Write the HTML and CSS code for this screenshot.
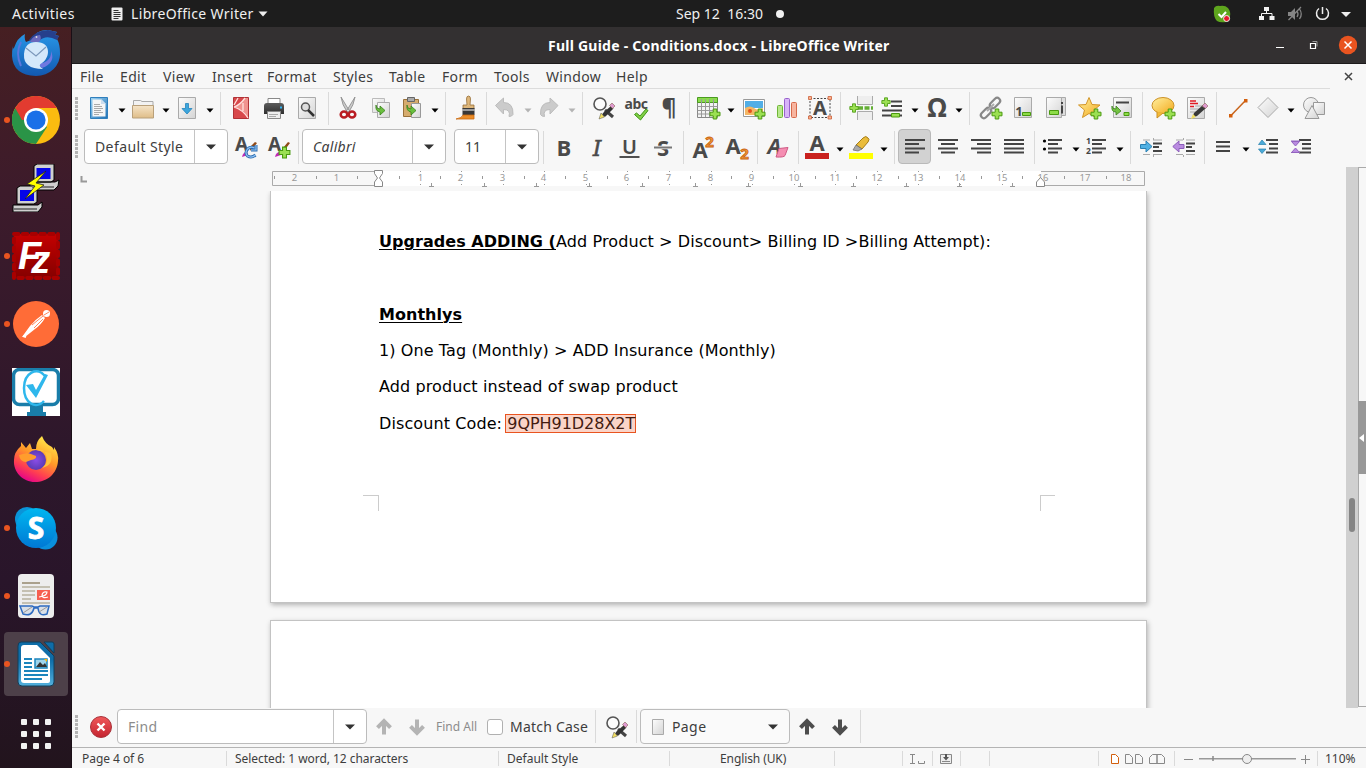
FILE: index.html
```html
<!DOCTYPE html>
<html lang="en">
<head>
<meta charset="utf-8">
<title>Full Guide - Conditions.docx - LibreOffice Writer</title>
<link rel="stylesheet" href="styles.css">
</head>
<body>
<svg class="defs" aria-hidden="true">
  <defs>
    <linearGradient id="gDark" x1="0" y1="0" x2="0" y2="1"><stop offset="0" stop-color="#5c5c5c"/><stop offset="1" stop-color="#2f2f2f"/></linearGradient>
    <linearGradient id="gPaper" x1="0" y1="0" x2="1" y2="1"><stop offset="0" stop-color="#fdfdfd"/><stop offset="1" stop-color="#d4d4d4"/></linearGradient>
    <linearGradient id="gBlue" x1="0" y1="0" x2="1" y2="1"><stop offset="0" stop-color="#9ed4f4"/><stop offset="1" stop-color="#1f70b4"/></linearGradient>
    <linearGradient id="gTan" x1="0" y1="0" x2="0" y2="1"><stop offset="0" stop-color="#f5e4c8"/><stop offset="1" stop-color="#dfbd88"/></linearGradient>
    <linearGradient id="gGold" x1="0" y1="0" x2="1" y2="1"><stop offset="0" stop-color="#fff0a0"/><stop offset="1" stop-color="#f3a91b"/></linearGradient>
    <linearGradient id="gRed" x1="0" y1="0" x2="0" y2="1"><stop offset="0" stop-color="#f0595b"/><stop offset="1" stop-color="#c4242f"/></linearGradient>
    <symbol id="arr" viewBox="0 0 8 24"><path d="M.5 11.5h7L4 15.5z"/></symbol>
    <symbol id="plus" viewBox="0 0 12 12"><path d="M4.2 1h3.6v3.2H11v3.6H7.8V11H4.2V7.8H1V4.2h3.200z" fill="#9be052" stroke="#4a9a10"/></symbol>
    <symbol id="findrep" viewBox="0 0 24 24"><circle cx="8" cy="8" r="6" fill="#fff" fill-opacity=".6" stroke="#555" stroke-width="1.600"/><path d="M13 14l8 7" stroke="#444" stroke-width="3"/><path d="M9 21l2-4 8-7 2.500 2.500-8 8z" fill="#333"/><path d="M7 23l2-6 3.500 4z" fill="#f2df62" stroke="#555" stroke-width=".5"/><path d="M17.500 9.500l2.500-2.500 3 3-2.500 2.500z" fill="#df9ad0" stroke="#865" stroke-width=".6"/></symbol>
    <symbol id="up" viewBox="0 0 24 24"><path d="M12 19.500V8M5.500 12.700L12 6.200l6.500 6.500" fill="none" stroke="currentColor" stroke-width="4"/></symbol>
    <symbol id="down" viewBox="0 0 24 24"><path d="M12 4.500V16M5.500 11.300l6.500 6.500 6.500-6.500" fill="none" stroke="currentColor" stroke-width="4"/></symbol>
  </defs>
</svg>

<header class="topbar">
  <span class="activities">Activities</span>
  <svg class="docicon" width="12" height="14" viewBox="0 0 12 14"><rect x=".5" y=".5" width="11" height="13" rx="1" fill="#eee"/><path d="M2.500 3.500h5M2.500 5.500h7M2.500 7.500h7M2.500 9.500h7M2.500 11.500h5" stroke="#333"/></svg>
  <span class="appname">LibreOffice Writer</span>
  <svg class="caret" width="10" height="6" viewBox="0 0 10 6"><path d="M.5.5h9L5 5.500z" fill="#eee"/></svg>
  <span class="clock">Sep 12&nbsp; 16:30</span>
  <span class="notify"></span>
  <svg class="tray" width="140" height="20" viewBox="1213 3 140 20">
    <path d="M1214 7q2-3 6-2 5-1 8 2 3 4 2 8 0 5-4 6-6 1-9-1-4-4-3-13z" fill="#5ea51d"/><path d="M1218.500 13l3 3 4.500-5" fill="none" stroke="#fff" stroke-width="2"/><circle cx="1226.600" cy="17.500" r="3" fill="#e8192c" stroke="#eee"/>
    <path d="M1264 6h5v4h-5zM1259 15h5v4h-5zM1269.500 15h5v4h-5z" fill="#f2f2f2"/><path d="M1266.500 10v3M1261.500 15v-2.500h10.500V15" fill="none" stroke="#f2f2f2"/>
    <path d="M1288 11h3l4-4v12l-4-4h-3z" fill="#858585"/><path d="M1297 10q2 3 0 6M1299.500 8q3.500 5 0 10M1288.500 19l12.500-13" fill="none" stroke="#858585" stroke-width="1.300"/>
    <path d="M1319 7.500a6 6 0 1 0 7 0M1322.500 6v7" fill="none" stroke="#eee" stroke-width="1.500"/><path d="M1341 11h10l-5 5z" fill="#eee"/>
  </svg>
</header>

<div class="desktop">
  <nav class="dock">
    <div class="app"><svg width="48" height="48" viewBox="0 0 48 48"><defs><linearGradient id="tb" x1="0" y1="0" x2="0" y2="1"><stop offset="0" stop-color="#2a9bea"/><stop offset="1" stop-color="#1258b0"/></linearGradient></defs><path d="M1 18q0 4 1 2Q5 10 13 6q-1 5 1 8l5-2Q25 1 36 2l9 2-2 3 4 1-2 3q3 5 3 14a24 22 0 0 1-24 23Q1 47 0 28q0-6 1-10z" fill="url(#tb)"/><path d="M17 12Q24 2 36 2l9 2-2 3 4 1-2 4Q34 6 27 13z" fill="#263f8c"/><path d="M18 14q3-7 10-7 2 4-1 7z" fill="#6a68bd"/><path d="M9 14Q3 25 9 38" fill="none" stroke="#5b77dc" stroke-width="2"/><path d="M26 36q14-2 13-13 5 12-9 17z" fill="#6f78e0"/><path d="M24 14c16 0 14 16 6 21q-5 2 1 6-20 0-19-15 1-12 12-12z" fill="#d4e8fa"/><path d="M14 20l10 8 10-9" fill="none" stroke="#7c98bb" stroke-width="1.200"/><circle cx="24.500" cy="9" r=".9" fill="#ddd"/></svg></div>
    <div class="app run"><svg width="48" height="48" viewBox="0 0 48 48"><circle cx="24" cy="24" r="24" fill="#fbbc10"/><path d="M24 24L3.200 12A24 24 0 0 0 24 48l11-17z" fill="#2a9447"/><path d="M3.200 12A24 24 0 0 1 44.800 12H24v12H10z" fill="#e23b30"/><circle cx="24" cy="24" r="12" fill="#fff"/><circle cx="24" cy="24" r="9.600" fill="#1a70e8"/></svg></div>
    <div class="app"><svg width="48" height="48" viewBox="0 0 48 48"><g stroke="#000" fill="#cfcfcf"><path d="M22 2l3-2h17v16l-3 2H22zM18 18h25l4-2-1 6-4 4H18z"/><path d="M5 24l3-2h17v16l-3 2H5zM1 41h25l4-3v5l-4 5H1z"/></g><path d="M24.500 4h14v11h-14zM8 26h14v11H8z" fill="#0505e8"/><path d="M2 45h23M20 23h22" stroke="#777" stroke-width="2"/><path d="M34 7L15 20l8 2-10 13 19-14-8-2z" fill="#ff0" stroke="#222" stroke-width=".8"/></svg></div>
    <div class="app run"><svg width="48" height="48" viewBox="0 0 48 48"><defs><linearGradient id="fz" x1="0" y1="0" x2="0" y2="1"><stop offset="0" stop-color="#c40000"/><stop offset="1" stop-color="#850000"/></linearGradient></defs><rect x="2" y="2" width="44" height="44" fill="url(#fz)" stroke="#a80000" stroke-width="4" stroke-dasharray="4.400 4.400" stroke-linecap="round"/><text class="fz" x="6" y="37">F<tspan dx="-10" dy="4">z</tspan></text></svg></div>
    <div class="app run"><svg width="48" height="48" viewBox="0 0 48 48"><circle cx="24" cy="24" r="23" fill="#ff6c37"/><circle cx="34.500" cy="13.500" r="3.500" fill="#fff"/><path d="M18 26q6-7 12-11l3 3q-4 7-10 11L13 37l-3 0z" fill="#fff"/><path d="M20 25l11-9M22 28l9-9M32 15l5-3" stroke="#ff6c37" stroke-width=".8"/><path d="M11 36l3 1" stroke="#fff" stroke-width="2"/></svg></div>
    <div class="app"><svg width="48" height="48" viewBox="0 0 48 48"><path d="M0 0h48v48H0z" fill="#fff"/><rect x="1.500" y="1.500" width="45" height="35" rx="6" fill="#fff" stroke="#197da9" stroke-width="3.500"/><path d="M18 38h13v6h3v4H15v-4h3z" fill="#197da9"/><path d="M33 8C25-2 12 5 12 20s12 22 20 13" fill="none" stroke="#2eb7ec" stroke-width="2.500"/><path d="M14 17l7-1 3 6L33 6l3 1-12 23z" fill="#2eb7ec"/></svg></div>
    <div class="app"><svg width="48" height="48" viewBox="0 1 48 48"><defs><linearGradient id="ff" x1=".8" y1="0" x2=".3" y2="1"><stop offset="0" stop-color="#fff44f"/><stop offset=".45" stop-color="#ff9a28"/><stop offset=".75" stop-color="#ff4050"/><stop offset="1" stop-color="#e3008c"/></linearGradient><radialGradient id="fp"><stop offset="0" stop-color="#8b4de8"/><stop offset="1" stop-color="#5b3bb5"/></radialGradient></defs><path d="M9 11V7l5 6 4-5 2 6h4q0-8 6-13 3 8 10 11l2 3V12q5 7 4 14c-1 13-11 21-23 21S1 37 2 25q0-8 7-14z" fill="url(#ff)"/><circle cx="24" cy="25" r="10" fill="url(#fp)"/><path d="M7 20q9-3 12-1l5 2q1 3-5 4l-5 2q-6 0-7-7z" fill="#ff9d2d"/><path d="M24 15q8-2 10 5 3 8-4 13 12-3 9-15z" fill="#ffc33b"/></svg></div>
    <div class="app run"><svg width="48" height="48" viewBox="0 0 48 48"><defs><linearGradient id="sk" x1="0" y1="0" x2="0" y2="1"><stop offset="0" stop-color="#00b7f0"/><stop offset="1" stop-color="#0078d4"/></linearGradient></defs><circle cx="15" cy="15" r="12" fill="#0a94d8"/><circle cx="33.500" cy="33.500" r="12" fill="#0a8fdc"/><circle cx="24" cy="24" r="20" fill="url(#sk)"/><text class="skype" x="24" y="35">S</text></svg></div>
    <div class="app run"><svg width="48" height="48" viewBox="0 0 48 48"><rect x="6" y="2" width="36" height="44" rx="4" fill="#ededed"/><path d="M10 11h18" stroke="#aaa18d" stroke-width="2"/><path d="M10 15h28M10 19h13M10 23h13M10 27h9M10 31h28" stroke="#c4c0b2" stroke-width="2"/><path d="M25 18h13v10H25z" fill="#f65f50"/><path d="M27 25q8-1 8-5-4-1-5 3 0 4 6 2" fill="none" stroke="#fff" stroke-width="1.200"/><path d="M8 34h12l2 1h4l2-1h9l-2 8q-8 3-9-6h-4q-2 9-11 6z" fill="#d9dfe6" stroke="#2e6bc0" stroke-width="1.500"/><path d="M11 41l9-6M27 40l8-5" stroke="#999"/></svg></div>
    <div class="app run current"><svg width="48" height="48" viewBox="0 0 48 48"><defs><linearGradient id="lw" x1="0" y1="0" x2="0" y2="1"><stop offset=".4" stop-color="#0e6da8"/><stop offset="1" stop-color="#53b0dd"/></linearGradient></defs><path d="M9 2h19l14 14v26q0 4-4 4H10q-4 0-4-4V6q0-4 3-4z" fill="url(#lw)" stroke="#123e5a"/><path d="M32 2h8q2 0 2 2v9z" fill="#0e6da8" stroke="#123e5a"/><path d="M12 5h13l13 13v23q0 2-2 2H12q-3 0-3-3V8q0-3 3-3z" fill="#fff"/><path d="M12 19h8M12 23h8M12 27h8M12 31h24M12 35h24M12 39h18" stroke="#1c85bd" stroke-width="2"/><path d="M23 19h12v9H23z" fill="#9fd4ec" stroke="#1c85bd" stroke-width="1.500"/><path d="M24 27l4-5 3 3 2-2 2 4z" fill="#333"/><path d="M32 19h3v3z" fill="#ffb400"/></svg></div>
    <div class="apps"><i></i><i></i><i></i><i></i><i></i><i></i><i></i><i></i><i></i></div>
  </nav>

  <main class="window">
    <div class="titlebar">
      <h1>Full Guide - Conditions.docx - LibreOffice Writer</h1>
      <svg class="winbtns" width="82" height="20" viewBox="1275 35 82 20"><path d="M1276 47.500h8" stroke="#fff"/><path d="M1312.500 41.500h4.500v5" fill="none" stroke="#999"/><path d="M1310.500 43.500h5v5h-5z" fill="none" stroke="#fff" stroke-width="1.200"/><circle cx="1348" cy="45" r="9.200" fill="#e95420"/><path d="M1344.500 41.500l7 7M1351.500 41.500l-7 7" stroke="#fff" stroke-width="1.500"/></svg>
    </div>

    <div class="menubar">
      <span>File</span><span>Edit</span><span>View</span><span>Insert</span><span>Format</span><span>Styles</span><span>Table</span><span>Form</span><span>Tools</span><span>Window</span><span>Help</span>
      <svg width="9" height="9" viewBox="0 0 9 9"><path d="M1 1l7 7M8 1L1 8" stroke="#444" stroke-width="1.500"/></svg>
    </div>

    <div class="toolbar standard">
      <i class="grip"></i>
      <svg class="ic" viewBox="0 0 24 24"><path d="M3.500 1.500h17v21h-17z" fill="url(#gBlue)" stroke="#2f7fbd"/><path d="M5.500 3.500h9l4 4v13h-13z" fill="#f6f6f6"/><path d="M14 3.500v4.500h4.500z" fill="#cde"/><path d="M7 8.500h6M7 10.500h8M7 12.500h9M7 14.500h7M7 16.500h9M7 18.500h5" stroke="#aaa"/></svg>
      <svg class="ar"><use href="#arr"/></svg>
      <svg class="ic" viewBox="0 0 24 24"><path d="M2.500 9V4.500h7l1.500 1h11V12h-20z" fill="#f2f2f2" stroke="#aaa"/><path d="M1.500 9.500h21v12.500h-21z" fill="url(#gTan)" stroke="#b9a07a"/></svg>
      <svg class="ar"><use href="#arr"/></svg>
      <svg class="ic" viewBox="0 0 24 24"><path d="M3.500 1.500h17v21h-17z" fill="url(#gPaper)" stroke="#aaa"/><path d="M10.500 7.500h3v5h3.500l-5 5.500-5-5.500h3.500z" fill="#3ca5dc" stroke="#2484bb" stroke-width=".8"/></svg>
      <svg class="ar"><use href="#arr"/></svg>
      <i class="sep"></i>
      <svg class="ic" viewBox="0 0 24 24"><path d="M4.500 1.500h15v21h-15z" fill="#d8484b" stroke="#b03236"/><path d="M16 2q-5 7-10 9 8 3 13 11V2z" fill="#f0938f"/><path d="M9 2L5 9M16 2q-5 7-11 9M5 11q9 3 14 11M14 7v8" fill="none" stroke="#ffe1de" stroke-width="1.300"/></svg>
      <svg class="ic" viewBox="0 0 24 24"><path d="M6 8V2.500h12V8" fill="#fff" stroke="#888"/><path d="M2 10q0-3 3-3h14q3 0 3 3v8H2z" fill="url(#gDark)"/><path d="M18 11.500h2" stroke="#31b4f2" stroke-width="2"/><path d="M5.500 15.500h13v7h-13z" fill="#eee" stroke="#888"/><path d="M7 18.500h9M7 20.500h7" stroke="#aaa"/></svg>
      <svg class="ic" viewBox="0 0 24 24"><path d="M3.500 1.500h17v21h-17z" fill="url(#gPaper)" stroke="#aaa"/><circle cx="10.500" cy="11" r="4" fill="#ddd" stroke="#555" stroke-width="1.500"/><path d="M13 14l6 6" stroke="#333" stroke-width="2.500"/></svg>
      <i class="sep"></i>
      <svg class="ic" viewBox="0 0 24 24"><path d="M5 1l8.500 14-2 1.500Q6 9 5 1zM19 1l-8.500 14 2 1.500Q18 9 19 1z" fill="#ccc" stroke="#888" stroke-width=".8"/><ellipse cx="8" cy="18.500" rx="3.300" ry="3" fill="none" stroke="#b91c22" stroke-width="2.500"/><ellipse cx="16" cy="18.500" rx="3.300" ry="3" fill="none" stroke="#b91c22" stroke-width="2.500"/></svg>
      <svg class="ic" viewBox="0 0 24 24"><path d="M3.500 2.500h12v14h-12z" fill="url(#gPaper)" stroke="#bbb"/><path d="M8.500 6.500h12v15h-12z" fill="url(#gPaper)" stroke="#aaa"/><path d="M7 9q0 4 4 4V10l5 4.500-5 4.500v-3q-5-1-4-7z" fill="#6abf3e" stroke="#37811a" stroke-width=".8"/></svg>
      <svg class="ic" viewBox="0 0 24 24"><path d="M3.500 3.500h15v17h-15z" fill="#d6ac6e" stroke="#99713a"/><path d="M7.500 1.500h7v4h-7z" fill="#aaa" stroke="#666"/><path d="M11.500 7.500h9v14h-9z" fill="url(#gPaper)" stroke="#999"/><path d="M7 9q0 4 4 4V10l5 4.500-5 4.500v-3q-5-1-4-7z" fill="#6abf3e" stroke="#37811a" stroke-width=".8"/></svg>
      <svg class="ar"><use href="#arr"/></svg>
      <i class="sep"></i>
      <svg class="ic" viewBox="0 0 24 24"><path d="M14.500 0q2 0 2 3l-.5 6h4v4H9V9h4l-.5-6q0-3 2-3z" fill="#ddb67a" stroke="#98703a" stroke-width=".8"/><path d="M8.500 12h12v7h-12z" fill="#383838"/><path d="M8.500 14h12" stroke="#fff"/><path d="M9 19h11v4H2q6-1 7-4z" fill="#eb8d28" stroke="#c96a10" stroke-width=".8"/></svg>
      <i class="sep"></i>
      <svg class="ic" viewBox="0 0 24 24"><path d="M2.500 9.500l8-7.500v4.500q10 0 9.500 12-1 2-4 2 2-7-5.500-7v4.500z" fill="#cbcbcb" stroke="#bcbcbc"/></svg>
      <svg class="ar off"><use href="#arr"/></svg>
      <svg class="ic" viewBox="0 0 24 24"><path d="M21 9.500L13 2v4.500Q3 6.500 3.500 18.500q1 2 4 2-2-7 5.500-7v4.500z" fill="#cbcbcb" stroke="#bcbcbc"/></svg>
      <svg class="ar off"><use href="#arr"/></svg>
      <i class="sep"></i>
      <svg class="ic"><use href="#findrep"/></svg>
      <span class="glyph abc">abc<svg width="16" height="13" viewBox="0 0 16 13"><path d="M1.500 6.500l2-1.500L7 8l6-7 2 1.500L7.500 12z" fill="#82cf47" stroke="#3c9613"/></svg></span>
      <span class="glyph pil">¶</span>
      <i class="sep"></i>
      <svg class="ic" viewBox="0 0 24 24"><path d="M.5 2.500h20v19H.5z" fill="#f3f3f3" stroke="#888"/><path d="M.5 1.500h20v5H.5z" fill="#8adc4b" stroke="#4a9a20"/><path d="M.5 10.500h20M.5 14.500h20M.5 18h20M4.500 3v18M8.500 3v18M12.500 3v18M16.500 3v18" stroke="#999"/><use href="#plus" x="12" y="12" width="12" height="12"/></svg>
      <svg class="ar"><use href="#arr"/></svg>
      <svg class="ic" viewBox="0 0 24 24"><path d="M1.500 3.500h21v17h-21z" fill="#fff" stroke="#999"/><path d="M3 5h18v7H3z" fill="#52aee6"/><path d="M3 12q5-3 9 0t9 0v7H3z" fill="#f4b765"/><circle cx="8" cy="15" r="2" fill="#e5511a"/><use href="#plus" x="12" y="12" width="12" height="12"/></svg>
      <svg class="ic" viewBox="0 0 24 24"><rect x="2.500" y="9.500" width="5" height="12" rx="1" fill="#b8e98c" stroke="#6fb636"/><rect x="9.500" y="2.500" width="5" height="19" rx="1" fill="#d7b4f7" stroke="#9861cc"/><rect x="16.500" y="6.500" width="5" height="15" rx="1" fill="#f7b5a0" stroke="#d66a4b"/></svg>
      <svg class="ic" viewBox="0 0 24 24"><path d="M2 2.500h20v19H2z" fill="none" stroke="#444" stroke-dasharray="2 1.500"/><path d="M.5.500h3v3h-3zM20 .5h3.500v3H20zM.5 20h3v3h-3zM20 20h3.500v3H20z" fill="#f9b28e" stroke="#cb603a" stroke-width=".8"/><text class="ltr" x="12" y="19" font-size="20">A</text></svg>
      <i class="sep"></i>
      <svg class="ic" viewBox="0 0 24 24"><path d="M8.500 0v8.500h15V0M8.500 24v-8.500h15V24" fill="#eee" stroke="#aaa"/><path d="M9 12h15" stroke="#63ae34" stroke-width="3.500" stroke-dasharray="5 1.500"/><use href="#plus" x="0" y="7" width="10" height="10"/></svg>
      <svg class="ic" viewBox="0 0 24 24"><path d="M10 5.500h11M10 10h11M1 14.500h20M1 19.500h20" stroke="#444" stroke-width="2"/><use href="#plus" x="0" y="1" width="10" height="10"/><path d="M10.500 17.500h8v3.500h-8z" fill="#9be052" stroke="#4a9a10"/></svg>
      <svg class="ar"><use href="#arr"/></svg>
      <svg class="ic" viewBox="0 0 24 24"><text class="ltr" x="12" y="21" font-size="26">Ω</text></svg>
      <svg class="ar"><use href="#arr"/></svg>
      <i class="sep"></i>
      <svg class="ic" viewBox="0 0 24 24"><g fill="none" stroke="#888" stroke-width="2.200"><rect x="10" y="4" width="12" height="6" rx="3" transform="rotate(-45 16 7)"/><rect x="1" y="14" width="12" height="6" rx="3" transform="rotate(-45 7 17)"/></g><path d="M8 15l7-7" stroke="#aaa" stroke-width="2"/><use href="#plus" x="12" y="12" width="12" height="12"/></svg>
      <svg class="ic" viewBox="0 0 24 24"><path d="M3.500 1.500h17v20h-17z" fill="url(#gPaper)" stroke="#aaa"/><text class="ltr" x="8" y="20" font-size="13">1</text><path d="M11.500 16.500h8v3h-8z" fill="#8ddc48" stroke="#4a9a10"/></svg>
      <svg class="ic" viewBox="0 0 24 24"><path d="M6.500 1.500h15v18h-15z" fill="#ddd" stroke="#aaa"/><path d="M2.500 1.500h15v20h-15z" fill="url(#gPaper)" stroke="#aaa"/><path d="M5.500 14.500h9v4h-9z" fill="#8ddc48" stroke="#4a9a10"/><path d="M18 6v2M18 9.500v8" stroke="#444" stroke-width="2"/></svg>
      <svg class="ic" viewBox="0 0 24 24"><path d="M12 1.500l3 7 8 .5-6 5 2 7.500-7-4-6.500 4 2-7.500-6-5 7.500-.5z" fill="url(#gGold)" stroke="#d29528"/><use href="#plus" x="13" y="12" width="12" height="12"/></svg>
      <svg class="ic" viewBox="0 0 24 24"><path d="M3.500 1.500h18v20h-18z" fill="url(#gPaper)" stroke="#aaa"/><path d="M6 6.500h13" stroke="#444" stroke-width="2"/><path d="M2 10q0 3 4 3v-3l5 5-5 4v-3q-5 0-4-6z" fill="#74c243" stroke="#3a811b" stroke-width=".8"/><path d="M14 16.500h5v3h-5z" fill="#8ddc48" stroke="#4a9a10"/></svg>
      <i class="sep"></i>
      <svg class="ic" viewBox="0 0 24 24"><ellipse cx="12" cy="9.500" rx="11" ry="8" fill="url(#gGold)" stroke="#cb9127"/><path d="M6 16v6l6-5" fill="#f3b938" stroke="#cb9127"/><use href="#plus" x="13" y="12" width="12" height="12"/></svg>
      <svg class="ic" viewBox="0 0 24 24"><path d="M1.500 1.500h17v21h-17z" fill="url(#gPaper)" stroke="#aaa"/><path d="M4 5h6M4 7.500h8M4 10.500h4" stroke="#e11b22" stroke-width="1.300"/><path d="M9 10h7M4 13h10M4 16h8" stroke="#aaa"/><path d="M6 22l2-5 9-8 3 3-9 8z" fill="#383838"/><path d="M5 23l2-5 3 3z" fill="#f2df62"/><path d="M16 10l3-3 3 3-2.500 2.500z" fill="#df9ad0" stroke="#865" stroke-width=".6"/></svg>
      <i class="sep"></i>
      <svg class="ic" viewBox="0 0 24 24"><path d="M5 19.500L19.500 4.500" stroke="#c8641b" stroke-width="1.500"/><path d="M3 18h3.500v3.500H3zM18 3h3.500v3.500H18z" fill="#d35f0d"/></svg>
      <svg class="ic" viewBox="0 0 24 24"><path d="M12 1.500l10 10-10 10-10-10z" fill="url(#gPaper)" stroke="#aaa"/></svg>
      <svg class="ar"><use href="#arr"/></svg>
      <svg class="ic" viewBox="0 0 24 24"><circle cx="9" cy="9" r="7.500" fill="url(#gPaper)" stroke="#999"/><path d="M11.500 6.500h11v12h-11z" fill="url(#gPaper)" stroke="#999"/><path d="M10 9.500l7 13H3z" fill="url(#gPaper)" stroke="#999"/></svg>
    </div>

    <div class="toolbar format">
      <i class="grip"></i>
      <div class="combo style"><span>Default Style</span><b><svg width="10" height="6"><path d="M0 .5h10L5 5.500z"/></svg></b></div>
      <svg class="ic" viewBox="0 0 24 24"><text class="ltr" x="7.500" y="16" font-size="19">A</text><path d="M15 13l6-6 2 1-6 8z" fill="#8f4a19"/><path d="M8 22q1-5 5-5l1 3z" fill="#c02ab5"/><path d="M20.500 13q-4-2-7 1-3 4 0 7 4 2.500 8-1M22 10v5h-5" fill="none" stroke="#2c6cb0" stroke-width="3"/><path d="M20.500 13q-4-2-7 1-3 4 0 7 4 2.500 8-1M22 10v5h-5" fill="none" stroke="#8fc1f2" stroke-width="1.200"/></svg>
      <svg class="ic" viewBox="0 0 24 24"><text class="ltr" x="8.500" y="16" font-size="19">A</text><path d="M17 13l5-6 2 1-6 8z" fill="#8f4a19"/><path d="M9 22q1-5 5-5l1 3z" fill="#c02ab5"/><use href="#plus" x="12" y="11" width="13" height="13"/></svg>
      <i class="sep"></i>
      <div class="combo font"><span>Calibri</span><b><svg width="10" height="6"><path d="M0 .5h10L5 5.500z"/></svg></b></div>
      <div class="combo size"><span>11</span><b><svg width="10" height="6"><path d="M0 .5h10L5 5.500z"/></svg></b></div>
      <i class="sep"></i>
      <svg class="ic" viewBox="0 0 24 24"><text class="ltr cond" x="12" y="20.500" font-size="22">B</text></svg>
      <svg class="ic" viewBox="0 0 24 24"><text class="ltr ital" x="12" y="20.500" font-size="22">I</text></svg>
      <svg class="ic" viewBox="0 0 24 24"><text class="ltr thin" x="12.500" y="18.500" font-size="20">U</text><path d="M2.500 22h20" stroke="#505050" stroke-width="2"/></svg>
      <svg class="ic" viewBox="0 0 24 24"><text class="ltr" x="12" y="20.500" font-size="22">S</text><path d="M3 12.500h18" stroke="#f7f7f7" stroke-width="3.500"/><path d="M3 12.500h18" stroke="#777" stroke-width="2"/></svg>
      <i class="sep"></i>
      <svg class="ic wide" viewBox="0 0 26 24"><text class="ltr" x="9" y="23" font-size="22">A</text><text class="num2" x="18.500" y="11.500">2</text></svg>
      <svg class="ic wide" viewBox="0 0 26 24"><text class="ltr" x="8" y="19" font-size="22">A</text><text class="num2" x="19.500" y="24">2</text></svg>
      <i class="sep"></i>
      <svg class="ic" viewBox="0 0 24 24"><text class="ltr slant" x="8.500" y="18.500" font-size="22">A</text><path d="M13 13.500l9-1-3 8q-1 2-9 1.500z" fill="#f58eb2" stroke="#cf5a85"/></svg>
      <i class="sep"></i>
      <svg class="ic" viewBox="0 0 24 24"><text class="ltr" x="12" y="15.500" font-size="22">A</text><path d="M0 18h24v6H0z" fill="#c9211e"/></svg>
      <svg class="ar"><use href="#arr"/></svg>
      <svg class="ic" viewBox="0 0 24 24"><path d="M7 10l7-7q3-3 5 0 2 1 0 4l-6 7z" fill="#eabc3b" stroke="#a57d18"/><path d="M4 15l3-5 6 4-4 2z" fill="#aaa" stroke="#666" stroke-width=".7"/><path d="M0 18h24v6H0z" fill="#ff0"/></svg>
      <svg class="ar"><use href="#arr"/></svg>
      <i class="sep"></i>
      <span class="pressed"><svg class="ic" viewBox="0 0 24 24"><path d="M2 5h20M2 9h14M2 13.500h20M2 17.500h14" stroke="#444" stroke-width="2"/></svg></span>
      <svg class="ic" viewBox="0 0 24 24"><path d="M2 5h20M5 9h14M2 13.500h20M5 17.500h14" stroke="#444" stroke-width="2"/></svg>
      <svg class="ic" viewBox="0 0 24 24"><path d="M2 5h20M8 9h14M2 13.500h20M8 17.500h14" stroke="#444" stroke-width="2"/></svg>
      <svg class="ic" viewBox="0 0 24 24"><path d="M2 5h20M2 9h20M2 13.500h20M2 17.500h20" stroke="#444" stroke-width="2"/></svg>
      <i class="sep"></i>
      <svg class="ic" viewBox="0 0 24 24"><path d="M7 5h14M7 9h10M7 13.500h14M7 17.500h10" stroke="#444" stroke-width="2"/><circle cx="3.500" cy="6" r="1.600"/><circle cx="3.500" cy="14" r="1.600"/></svg>
      <svg class="ar"><use href="#arr"/></svg>
      <svg class="ic" viewBox="0 0 24 24"><g class="tiny"><text x="3.500" y="9">1</text><text x="3.500" y="18.500">2</text></g><path d="M7 5h14M7 9h10M7 13.500h14M7 17.500h10" stroke="#444" stroke-width="2"/></svg>
      <svg class="ar"><use href="#arr"/></svg>
      <i class="sep"></i>
      <svg class="ic" viewBox="0 0 24 24"><path d="M14 5h9M4 5h7M4 19.500h7M14 19.500h9M14.500 3v2M14.500 20v2" stroke="#aaa"/><path d="M14 8.500h9M14 12h6M14 16h9" stroke="#444" stroke-width="2"/><path d="M1.500 9.500H7V6l6 5.500L7 17v-3.500H1.500z" fill="#50b1e4" stroke="#2a81b4"/></svg>
      <svg class="ic" viewBox="0 0 24 24"><path d="M14 5h9M4 5h7M4 19.500h7M14 19.500h9M11.500 3v2M11.500 20v2" stroke="#aaa"/><path d="M14 8.500h9M14 12h6M14 16h9" stroke="#444" stroke-width="2"/><path d="M12 9.500H7V6L.8 11.500 7 17v-3.500h5z" fill="#b98be0" stroke="#8c5dbb"/></svg>
      <i class="sep"></i>
      <svg class="ic" viewBox="0 0 24 24"><path d="M5 7h14M5 11.500h14M5 16h14" stroke="#444" stroke-width="2"/></svg>
      <svg class="ar"><use href="#arr"/></svg>
      <svg class="ic" viewBox="0 0 24 24"><path d="M10 5h12M13 9h9M13 13.500h9M10 17.500h12" stroke="#444" stroke-width="2"/><path d="M2.500 9.500L6 5l4 4.500zM2.500 14L6 18.500l4-4.500z" fill="#4aaad8" stroke="#2780ac" stroke-width=".7"/></svg>
      <svg class="ic" viewBox="0 0 24 24"><path d="M10 5h12M13 9h9M13 13.500h9M10 17.500h12" stroke="#444" stroke-width="2"/><path d="M2.500 6.500h8L6.500 11zM2.500 17.500l4-4.500 4 4.500zM2 6h9M2 17.500h9" fill="#b98be0" stroke="#9364c0"/></svg>
    </div>

    <div class="editor">
      <div class="canvas">
        <div class="rulerrow">
          <svg width="1274" height="24" viewBox="72 167 1274 24">
            <path d="M81.500 176v5.500H87" fill="none" stroke="#999" stroke-width="2"/>
            <path d="M378 171h663v15H378z" fill="#fff"/>
            <path d="M378 171.500H272.500v14H378M1041 171.500h103.500v14H1041" fill="#f7f7f7" stroke="#aaa"/>
            <path class="half" d="M274.500 176v3M316.500 176v3M357.500 176v3M399.500 176v3M440.500 176v3M482.500 176v3M524.500 176v3M565.500 176v3M607.500 176v3M648.500 176v3M690.500 176v3M731.500 176v3M773.500 176v3M815.500 176v3M856.500 176v3M898.500 176v3M939.500 176v3M981.500 176v3M1022.500 176v3M1064.500 176v3M1106.500 176v3"/>
            <path class="half" d="M420.500 171v1m0 12v1M461.500 171v1m0 12v1M503.500 171v1m0 12v1M544.500 171v1m0 12v1M586.500 171v1m0 12v1M627.500 171v1m0 12v1M669.500 171v1m0 12v1M711.500 171v1m0 12v1M752.500 171v1m0 12v1M794.500 171v1m0 12v1M835.500 171v1m0 12v1M877.500 171v1m0 12v1M918.500 171v1m0 12v1M960.500 171v1m0 12v1M1002.500 171v1m0 12v1"/>
            <path class="half" d="M431.500 183v3m-2.500.500h5M484.500 183v3m-2.500.500h5M536.500 183v3m-2.500.500h5M589.500 183v3m-2.500.500h5M642.500 183v3m-2.500.500h5M695.500 183v3m-2.500.500h5M748.500 183v3m-2.500.500h5M800.500 183v3m-2.500.500h5M853.500 183v3m-2.500.500h5M906.500 183v3m-2.500.500h5M959.500 183v3m-2.500.500h5M1012.500 183v3m-2.500.500h5"/>
            <g class="rnum"><text x="294.500" y="181">2</text><text x="336.500" y="181">1</text><text x="420.500" y="181">1</text><text x="460.500" y="181">2</text><text x="502.500" y="181">3</text><text x="543.500" y="181">4</text><text x="585.500" y="181">5</text><text x="626.500" y="181">6</text><text x="668.500" y="181">7</text><text x="710.500" y="181">8</text><text x="751.500" y="181">9</text><text x="794" y="181">10</text><text x="835" y="181">11</text><text x="877" y="181">12</text><text x="918" y="181">13</text><text x="960" y="181">14</text><text x="1002" y="181">15</text><text x="1043" y="181">16</text><text x="1085" y="181">17</text><text x="1126" y="181">18</text></g>
            <path d="M374.500 170.500h8v3l-3 4.500 3 4v4.500h-8V182l3-4-3-4.500zM1036.500 186.500V182l4-4.500 4 4.500v4.500z" fill="#fff" stroke="#888"/>
          </svg>
        </div>
        <div class="pages">
          <article class="page first">
            <p><strong>Upgrades ADDING (</strong>Add Product &gt; Discount&gt; Billing ID &gt;Billing Attempt):</p>
            <p>&nbsp;</p>
            <p><strong>Monthlys</strong></p>
            <p>1) One Tag (Monthly) &gt; ADD Insurance (Monthly)</p>
            <p>Add product instead of swap product</p>
            <p>Discount Code: <mark>9QPH91D28X2T</mark></p>
            <div class="corners"><i></i><i></i></div>
          </article>
          <article class="page second"></article>
        </div>
      </div>
      <div class="scroll"><i></i></div>
      <div class="sidebar"><i><svg width="5" height="8"><path d="M5 0v8L0 4z" fill="#fff"/></svg></i></div>
    </div>

    <div class="findbar">
      <i class="grip"></i>
      <svg class="close" width="22" height="22" viewBox="0 0 22 22"><circle cx="11" cy="11" r="10.500" fill="url(#gRed)" stroke="#a9333b"/><path d="M7.500 7.500l7 7M14.500 7.500l-7 7" stroke="#fff" stroke-width="2.400"/></svg>
      <div class="combo find"><span>Find</span><b><svg width="10" height="6"><path d="M0 .5h10L5 5.500z"/></svg></b></div>
      <svg class="ic off"><use href="#up"/></svg>
      <svg class="ic off"><use href="#down"/></svg>
      <span class="findall">Find All</span>
      <i class="check"></i>
      <span class="match">Match Case</span>
      <i class="sep"></i>
      <svg class="ic"><use href="#findrep"/></svg>
      <i class="sep"></i>
      <div class="combo nav"><svg width="12" height="16"><path d="M.5.5h11v15H.5z" fill="url(#gPaper)" stroke="#aaa"/></svg><span>Page</span><svg width="10" height="6"><path d="M0 .5h10L5 5.500z"/></svg></div>
      <svg class="ic"><use href="#up"/></svg>
      <svg class="ic"><use href="#down"/></svg>
      <i class="sep"></i>
    </div>

    <footer class="status">
      <span class="s-page">Page 4 of 6</span><i></i>
      <span class="s-sel">Selected: 1 word, 12 characters</span><i></i>
      <span class="s-style">Default Style</span><i></i>
      <span class="s-lang">English (UK)</span><i></i>
      <em></em><i></i>
      <svg width="16" height="12" viewBox="0 0 16 12"><path d="M0 1.500h5M0 10.500h5M2.500 1v10M8.500 8v2.500h6V8" fill="none" stroke="#888"/></svg><i></i>
      <svg width="14" height="12" viewBox="0 0 14 12"><path d="M1.500 1.500h11v9h-11z" fill="#eee" stroke="#888"/><path d="M3 8.500h8" stroke="#888"/><path d="M6 1h2v3h2L7 7.500 4 4h2z" fill="#555"/></svg><i></i>
      <em></em><i></i><em></em><i></i>
      <svg width="56" height="12" viewBox="1110 753 56 12"><path d="M1111.500 754.500h4l3 3v6h-7z" fill="#fff" stroke="#d35f0d"/><path d="M1125.500 754.500h4l3 3v6h-7zM1135.500 754.500h4l3 3v6h-7zM1157 754.500v9h-7.500v-6l3-3zM1157 754.500h4.500l3 3v6H1157z" fill="none" stroke="#888"/></svg><i></i>
      <svg width="128" height="12" viewBox="1183 753 128 12"><path d="M1184 759.500h9M1301 759.500h9M1305.500 755v9" stroke="#888"/><path d="M1199 758.700h97" stroke="#999" stroke-width="1.500"/><path d="M1213 756v5" stroke="#888" stroke-width="1.500"/><circle cx="1247" cy="759" r="4.500" fill="#eee" stroke="#888"/></svg><i></i>
      <span class="zoom">110%</span>
    </footer>
  </main>
</div>
</body>
</html>
```
FILE: styles.css
```css
* { box-sizing: border-box; }
body {
  margin: 0;
  width: 1366px;
  height: 768px;
  overflow: hidden;
  display: flex;
  flex-direction: column;
  background: #f7f7f7;
  color: #3d3d3d;
  font: 14px/20px "Noto Sans", sans-serif;
}
.defs { position: absolute; width: 0; height: 0; }
svg { display: block; flex: none; }
i { display: block; font-style: normal; }

/* top panel */
.topbar {
  flex: none;
  height: 27px;
  padding: 0 13px 0 12px;
  display: flex;
  align-items: center;
  background: #1d1d1d;
  color: #f0f0f0;
  white-space: nowrap;
}
.activities { width: 99px; letter-spacing: .45px; }
.appname { width: 127px; margin-left: 8px; letter-spacing: .35px; }
.clock { margin-left: 408px; width: 99px; }
.notify { width: 8px; height: 8px; border-radius: 50%; background: #f0f0f0; margin-left: 1px; }
.tray { margin-left: auto; }

.desktop { flex: 1; min-height: 0; display: flex; }

/* dock */
.dock {
  flex: none;
  width: 72px;
  overflow: hidden;
  display: flex;
  flex-direction: column;
  justify-content: flex-end;
  box-shadow: inset -1px 0 #1a0f16;
  background: linear-gradient(#461f22, #3d1b2b 22%, #2d172b 58%, #29152a 75%, #22141d);
}
.app {
  flex: none;
  height: 68px;
  display: flex;
  align-items: center;
  padding-left: 12px;
  position: relative;
}
.run::before {
  content: "";
  position: absolute;
  left: 4px;
  top: 31px;
  width: 6px;
  height: 6px;
  border-radius: 50%;
  background: #e95420;
}
.current { height: 64px; margin: 2px 4px; padding-left: 8px; border-radius: 4px; background: #4d4049; }
.current::before { left: 0; top: 29px; }
.fz { font: italic 700 38px "Liberation Sans", sans-serif; fill: #fff; }
.skype { font: 700 30px "Noto Sans", sans-serif; fill: #fff; stroke: #fff; stroke-width: .8px; text-anchor: middle; }
.apps {
  flex: none;
  height: 70px;
  padding: 21px 0 0 21px;
  display: grid;
  grid-template-columns: repeat(3, 6px);
  grid-auto-rows: 6px;
  gap: 6px;
}
.apps i { border-radius: 1px; background: #f2f2f2; }

/* window */
.window { flex: 1; min-width: 0; display: flex; flex-direction: column; }
.titlebar {
  flex: none;
  height: 37px;
  display: flex;
  align-items: center;
  padding: 0 9px 0 476px;
  background: #333031;
  border-bottom: 1px solid #1d1b1c;
}
.titlebar h1 { margin: 0; padding-top: 1px; font-size: 14px; line-height: 20px; letter-spacing: .24px; color: #fff; white-space: nowrap; }
.winbtns { margin-left: auto; }
.menubar {
  flex: none;
  height: 24px;
  padding: 1px 0 0 8px;
  display: grid;
  grid-template-columns: 40px 43px 49px 55px 66px 56px 53px 52px 52px 70px 728px auto;
  align-items: center;
  white-space: nowrap;
  letter-spacing: .35px;
}
.menubar svg { margin-bottom: 1px; }
.toolbar { flex: none; display: grid; align-items: center; padding-left: 3px; }
.standard {
  width: 1258px;
  height: 39px;
  border-top: 1px solid #dcdcdc;
  grid-template-columns: 12px 30px 14px 30px 14px 30px 15px 9px 33px 33px 33px 8px 33px 31px 30px 15px 9px 32px 7px 30px 14px 30px 15px 10px 32px 33px 32px 8px 29px 16px 33px 33px 32px 9px 32px 29px 15px 29px 15px 10px 32px 33px 33px 33px 32px 9px 35px 30px 10px 30px 30px 16px 28px;
}
.format {
  height: 40px;
  grid-template-columns: 9px 150px 32px 32px 4px 152px 89px 9px 33px 32px 34px 32px 8px 34px 32px 9px 32px 7px 30px 14px 30px 15px 4px 38px 33px 33px 32px 7px 30px 14px 30px 15px 9px 33px 32px 7px 30px 15px 33px 41px;
}
.ic { width: 24px; height: 24px; color: #4d4d4d; overflow: visible; }
.wide { width: 26px; }
.ar { width: 8px; height: 24px; color: #000; fill: #000; margin: 1px 0 0 .5px; }
.off { color: #b4b4b4; fill: #b4b4b4; }
.sep { width: 1px; height: 33px; background: #dadada; }
.grip { width: 3px; height: 23px; background: repeating-linear-gradient(#b4b4b4 0 3px, transparent 3px 4px); }
.glyph { height: 24px; font-weight: 700; color: #4a4a4a; }
.abc { display: flex; flex-direction: column; align-items: center; width: 24px; padding-top: 2px; font-size: 14px; line-height: 12px; letter-spacing: -.5px; }
.abc svg { margin: -2px 0 0 9px; }
.pil { width: 24px; text-align: center; font-size: 23px; line-height: 22px; }
.ltr { font-weight: 700; fill: #4a4a4a; text-anchor: middle; }
.cond { font-family: "Open Sans", sans-serif; }
.thin { font-weight: 600; }
.slant { font-style: italic; }
.ital { font-style: italic; font-family: "DejaVu Serif", serif; font-weight: 400; stroke: #4a4a4a; stroke-width: .5px; }
.num2 { font-size: 15px; font-weight: 700; fill: #f39a3c; stroke: #c9640f; stroke-width: .9px; text-anchor: middle; }
.tiny { font-size: 8.500px; font-weight: 700; fill: #444; text-anchor: middle; }
.combo {
  height: 35px;
  display: flex;
  align-items: center;
  border: 1px solid #bcbcbc;
  border-radius: 4px;
  background: #fff;
  padding-left: 10px;
  white-space: nowrap;
}
.combo b {
  margin-left: auto;
  height: 100%;
  display: flex;
  align-items: center;
  justify-content: center;
  border-left: 1px solid #c4c4c4;
}
.combo svg { fill: #333; }
.format .combo, .format .pressed, .format .grip { margin-bottom: 1px; }
.style { width: 144px; letter-spacing: .4px; }
.style b, .font b { width: 33px; }
.font { width: 144px; font-style: italic; letter-spacing: .3px; }
.size { width: 85px; }
.size b { width: 33px; }
.pressed { width: 33px; height: 35px; display: grid; place-items: center; border: 1px solid #b9b9b9; border-radius: 4px; background: #d2d2d2; }

/* document */
.editor { flex: 1; min-height: 0; display: flex; }
.canvas { flex: 1; min-width: 0; display: flex; flex-direction: column; }
.rulerrow { flex: none; height: 24px; }
.half { fill: none; stroke: #999; }
.rnum { font-size: 9.500px; fill: #999; text-anchor: middle; }
.pages { flex: 1; min-height: 0; overflow: hidden; padding-left: 198px; }
.page { width: 877px; background: #fff; border: 1px solid #c3c3c3; box-shadow: 1px 2px 5px rgba(0, 0, 0, .28); }
.first { height: 412px; border-top: 0; padding: 32.800px 91px 0 108px; color: #000; font: 16px/36.400px "DejaVu Sans", sans-serif; letter-spacing: .1px; }
.first p { margin: 0; white-space: nowrap; }
.first strong { letter-spacing: .04px; text-decoration: underline; text-decoration-thickness: 1px; text-underline-offset: 2px; }
.first mark { display: inline-block; height: 19px; line-height: 18px; margin-left: -2px; padding-left: 1px; border: 1px solid #e95420; background: #fad4c8; color: #431b10; letter-spacing: -.04px; }
.corners { display: flex; justify-content: space-between; margin: 53.200px 0 0 -16px; }
.corners i { width: 16px; height: 16px; border: solid #ccc; border-width: 1px 1px 0 0; }
.corners i:last-child { width: 15px; border-width: 1px 0 0 1px; }
.second { height: 120px; margin-top: 17px; }
.scroll { flex: none; width: 12px; padding: 331px 3px 0; background: #d0d0d0; }
.scroll i { width: 6px; height: 34px; border-radius: 3px; background: #858585; }
.sidebar { flex: none; width: 8px; height: 540px; padding-top: 233px; border: 1px solid #aaa; border-right: 0; }
.sidebar i { height: 73px; display: flex; align-items: center; margin-left: -1px; padding-left: 1px; background: #989898; }

/* find bar */
.findbar {
  flex: none;
  height: 39px;
  padding: 0 0 2px 3px;
  display: grid;
  grid-template-columns: 15px 27px 255px 33px 31px 51px 23px 85px 10px 31px 4px 155px 33px 32px 20px;
  align-items: center;
  white-space: nowrap;
}
.find { width: 250px; color: #8c8c8c; letter-spacing: .3px; }
.find b { width: 33px; }
.findall { font-size: 12px; color: #8c8c8c; }
.match { letter-spacing: .22px; }
.check { width: 16px; height: 16px; border: 1px solid #b0b0b0; border-radius: 3px; background: #fff; }
.nav { width: 150px; gap: 8px; padding: 0 11px; background: #fafafa; letter-spacing: .4px; }
.nav svg:last-child { margin-left: auto; }

/* status bar */
.status {
  flex: none;
  height: 21px;
  display: grid;
  grid-template-columns: 144px 9px 263px 9px 162px 1px 164px 1px 67px 8px 22px 7px 21px 1px 28px 1px 108px 12px 64px 9px 134px 8px auto;
  align-items: center;
  padding: 1px 0 0 10px;
  border-top: 1px solid #b4b4b4;
  font-size: 12px;
  line-height: 18px;
  white-space: nowrap;
}
.status i { width: 1px; height: 15px; background: #dadada; }
.s-lang { padding-left: 50px; letter-spacing: -.1px; }
.s-page, .s-sel { letter-spacing: -.05px; }
```
